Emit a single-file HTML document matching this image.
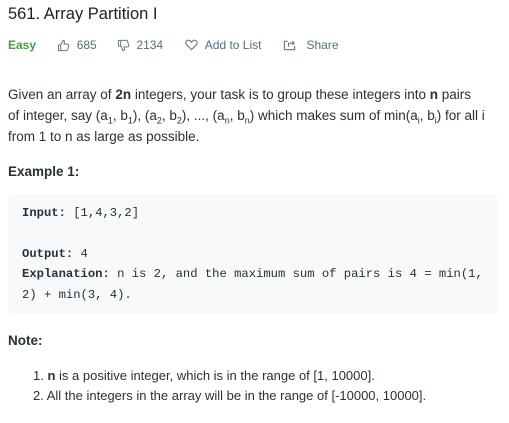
<!DOCTYPE html>
<html><head><style>
body{margin:0;background:#fff;width:509px;height:423px;overflow:hidden;font-family:"Liberation Sans",sans-serif;color:#263238;}
.t{position:absolute;left:8px;top:5px;font-size:16.5px;color:#212121;}
.meta{position:absolute;top:37px;left:8px;font-size:12px;color:#546e7a;display:flex;align-items:center;height:16px;}
.meta span{display:inline-flex;align-items:center;}
.p{position:absolute;left:8px;font-size:13.5px;line-height:21px;width:490px;}
sub{font-size:9px;line-height:0;}
.code{position:absolute;left:8px;top:194px;width:489px;height:120px;background:#f7f9fa;border-radius:3px;}
.c{position:absolute;left:22px;font-family:"Liberation Mono",monospace;font-size:12.2px;color:#263238;white-space:pre;}
</style></head><body>
<div class="t">561. Array Partition I</div>
<div class="meta">
<span style="color:#43a047;font-weight:bold;">Easy</span>
<span style="margin-left:21px"><svg width="13" height="13" viewBox="0 0 14 14" fill="none" stroke="#607d8b" stroke-width="1.1"><path d="M1.5 6.5h2.5v6h-2.5z M4 6.5l2.5-5c1.2 0 1.8.8 1.5 2l-.5 2h4c.8 0 1.3.7 1.1 1.4l-1.2 4.8c-.2.5-.6.8-1.1.8H4"/></svg>&nbsp;&nbsp;685</span>
<span style="margin-left:20px"><svg width="13" height="13" viewBox="0 0 14 14" fill="none" stroke="#607d8b" stroke-width="1.1"><path d="M1.5 1.5h2.5v6h-2.5z M4 7.5l2.5 5c1.2 0 1.8-.8 1.5-2l-.5-2h4c.8 0 1.3-.7 1.1-1.4L11.4 2.3c-.2-.5-.6-.8-1.1-.8H4"/></svg>&nbsp;&nbsp;2134</span>
<span style="margin-left:22px"><svg width="13" height="12" viewBox="0 0 14 12" fill="none" stroke="#607d8b" stroke-width="1.2"><path d="M7 11L1.8 5.8C.5 4.5.6 2.4 2 1.4 3.4.4 5.2.9 7 3c1.8-2.1 3.6-2.6 5-1.6 1.4 1 1.5 3.1.2 4.4z"/></svg>&nbsp;&nbsp;Add to List</span>
<span style="margin-left:22px"><svg width="13" height="12" viewBox="0 0 14 12" fill="none" stroke="#607d8b" stroke-width="1.2"><path d="M5 2H1.5v9h11V7 M6 8V4h6 M10 2l2 2-2 2"/></svg>&nbsp;&nbsp;&nbsp;Share</span>
</div>
<div class="p" style="top:84px">Given an array of <b>2n</b> integers, your task is to group these integers into <b>n</b> pairs<br>of integer, say (a<sub>1</sub>, b<sub>1</sub>), (a<sub>2</sub>, b<sub>2</sub>), ..., (a<sub>n</sub>, b<sub>n</sub>) which makes sum of min(a<sub>i</sub>, b<sub>i</sub>) for all i<br>from 1 to n as large as possible.</div>
<div class="p" style="top:161px;font-weight:bold">Example 1:</div>
<div class="code"></div>
<div class="c" style="top:206px"><b>Input:</b> [1,4,3,2]</div>
<div class="c" style="top:247px"><b>Output:</b> 4</div>
<div class="c" style="top:267px"><b>Explanation:</b> n is 2, and the maximum sum of pairs is 4 = min(1,</div>
<div class="c" style="top:288px">2) + min(3, 4).</div>
<div class="p" style="top:330px;font-weight:bold">Note:</div>
<div class="p" style="top:366px;left:33px;line-height:20px;font-size:13px">1. <b>n</b> is a positive integer, which is in the range of [1, 10000].<br>2. All the integers in the array will be in the range of [-10000, 10000].</div>
</body></html>
